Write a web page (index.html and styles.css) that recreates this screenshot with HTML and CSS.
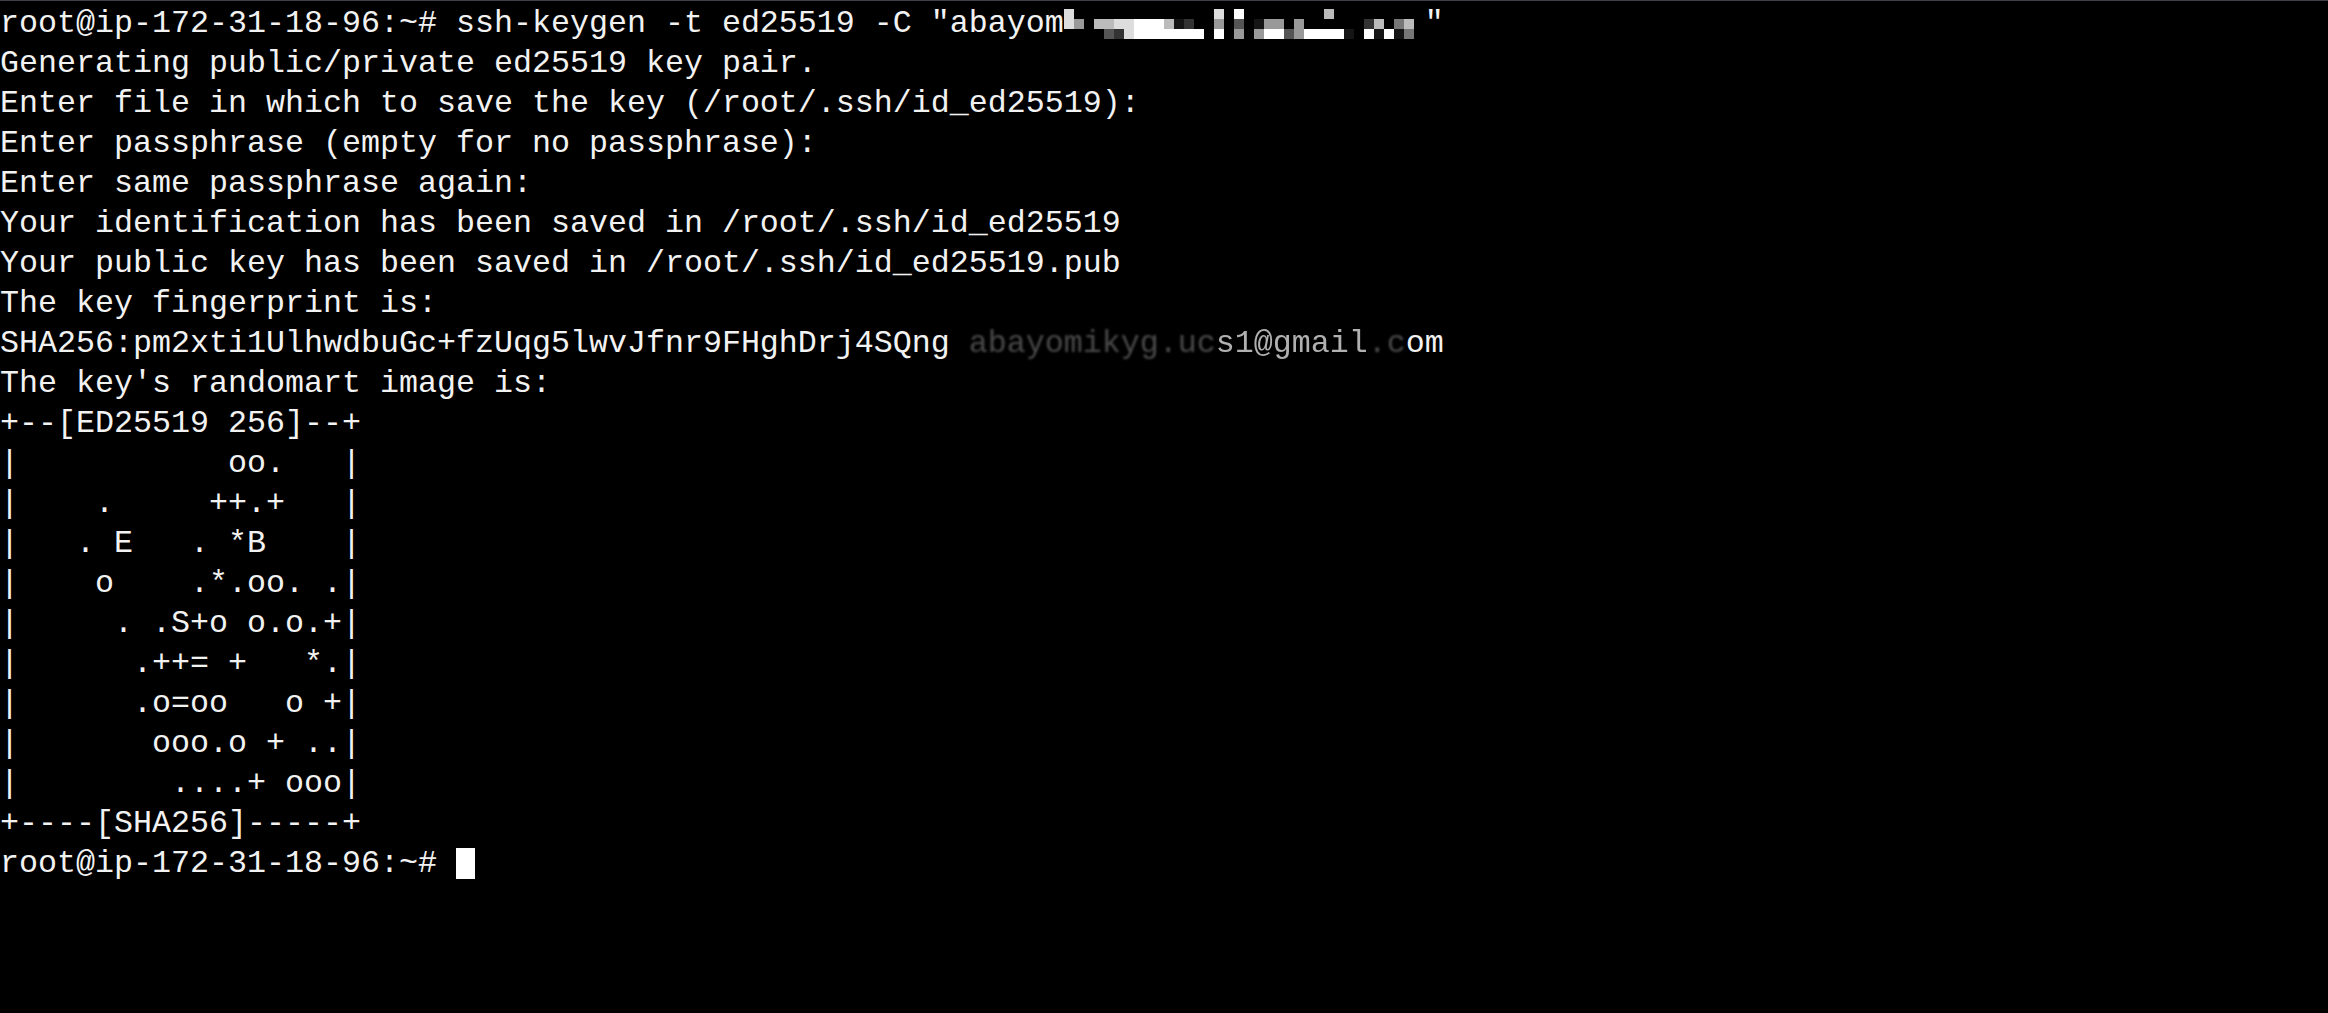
FILE: index.html
```html
<!DOCTYPE html>
<html lang="en">
<head>
    <meta charset="UTF-8">
    <meta name="viewport" content="width=device-width, initial-scale=1.0">
    <title>root@ip-172-31-18-96: ~</title>
    <link rel="stylesheet" href="styles.css">
</head>
<body>
    <div class="screen">
        <div class="line">root@ip-172-31-18-96:~# ssh-keygen -t ed25519 -C "abayom<span class="mosaic"><span class="row"><i class="b"></i><i></i><i></i><i></i><i></i><i></i><i></i><i></i><i></i><i></i><i></i><i></i><i></i><i></i><i></i><i class="b"></i><i></i><i class="a"></i><i></i><i></i><i></i><i></i><i></i><i></i><i></i><i></i><i class="c"></i></span><span class="row"><i class="b"></i><i class="d"></i><i></i><i class="c"></i><i class="c"></i><i class="b"></i><i class="b"></i><i class="a"></i><i class="a"></i><i class="a"></i><i class="c"></i><i class="h"></i><i class="g"></i><i></i><i></i><i class="d"></i><i></i><i class="f"></i><i></i><i class="h"></i><i class="d"></i><i class="d"></i><i></i><i class="d"></i><i></i><i></i><i></i><i></i><i></i><i></i><i class="g"></i><i class="c"></i><i></i><i class="e"></i><i class="c"></i></span><span class="row"><i></i><i></i><i></i><i></i><i class="f"></i><i class="g"></i><i class="b"></i><i class="a"></i><i class="a"></i><i class="a"></i><i class="a"></i><i class="a"></i><i class="a"></i><i class="a"></i><i></i><i class="a"></i><i></i><i class="d"></i><i></i><i class="d"></i><i class="a"></i><i class="a"></i><i class="f"></i><i class="d"></i><i class="a"></i><i class="a"></i><i class="a"></i><i class="a"></i><i class="h"></i><i></i><i class="a"></i><i class="h"></i><i class="a"></i><i class="h"></i><i class="e"></i></span></span>"</div>
        <div class="line">Generating public/private ed25519 key pair.</div>
        <div class="line">Enter file in which to save the key (/root/.ssh/id_ed25519):</div>
        <div class="line">Enter passphrase (empty for no passphrase):</div>
        <div class="line">Enter same passphrase again:</div>
        <div class="line">Your identification has been saved in /root/.ssh/id_ed25519</div>
        <div class="line">Your public key has been saved in /root/.ssh/id_ed25519.pub</div>
        <div class="line">The key fingerprint is:</div>
        <div class="line">SHA256:pm2xti1UlhwdbuGc+fzUqg5lwvJfnr9FHghDrj4SQng <span class="smear">abayomikyg.uc</span><span class="smear-mid">s1@gmail</span><span class="smear">.c</span>om</div>
        <div class="line">The key's randomart image is:</div>
        <div class="line">+--[ED25519 256]--+</div>
        <div class="line">|           oo.   |</div>
        <div class="line">|    .     ++.+   |</div>
        <div class="line">|   . E   . *B    |</div>
        <div class="line">|    o    .*.oo. .|</div>
        <div class="line">|     . .S+o o.o.+|</div>
        <div class="line">|      .++= +   *.|</div>
        <div class="line">|      .o=oo   o +|</div>
        <div class="line">|       ooo.o + ..|</div>
        <div class="line">|        ....+ ooo|</div>
        <div class="line">+----[SHA256]-----+</div>
        <div class="line">root@ip-172-31-18-96:~# <span class="cursor"></span></div>
    </div>
</body>
</html>
```

FILE: styles.css
```css
html {
    background-color: #000;
}
body {
    margin: 0;
    padding: 0;
    min-height: 1012px;
    background-color: #000;
    border-top: 1px solid #3d4147;
}
.screen {
    padding-top: 3px;
    font-family: "Liberation Mono", "Courier New", monospace;
    font-size: 31.67px;
    line-height: 40px;
    color: #f2f2f2;
}
.line {
    height: 40px;
    white-space: pre;
}
.mosaic {
    display: inline-flex;
    flex-direction: column;
    vertical-align: top;
    width: 361px;
    margin-top: 5px;
}
.mosaic .row {
    display: flex;
    height: 10px;
}
.mosaic i {
    flex: 0 0 10px;
    height: 10px;
}
.mosaic .a { background: #ffffff; }
.mosaic .b { background: #dddddd; }
.mosaic .c { background: #bbbbbb; }
.mosaic .d { background: #999999; }
.mosaic .e { background: #777777; }
.mosaic .f { background: #555555; }
.mosaic .g { background: #333333; }
.mosaic .h { background: #151515; }
.smear {
    color: #4a4a4a;
    filter: blur(1.2px);
}
.smear-mid {
    color: #b0b0b0;
    filter: blur(0.6px);
}
.cursor {
    display: inline-block;
    width: 19px;
    height: 31px;
    margin-top: 4px;
    vertical-align: top;
    background-color: #fff;
}
```
